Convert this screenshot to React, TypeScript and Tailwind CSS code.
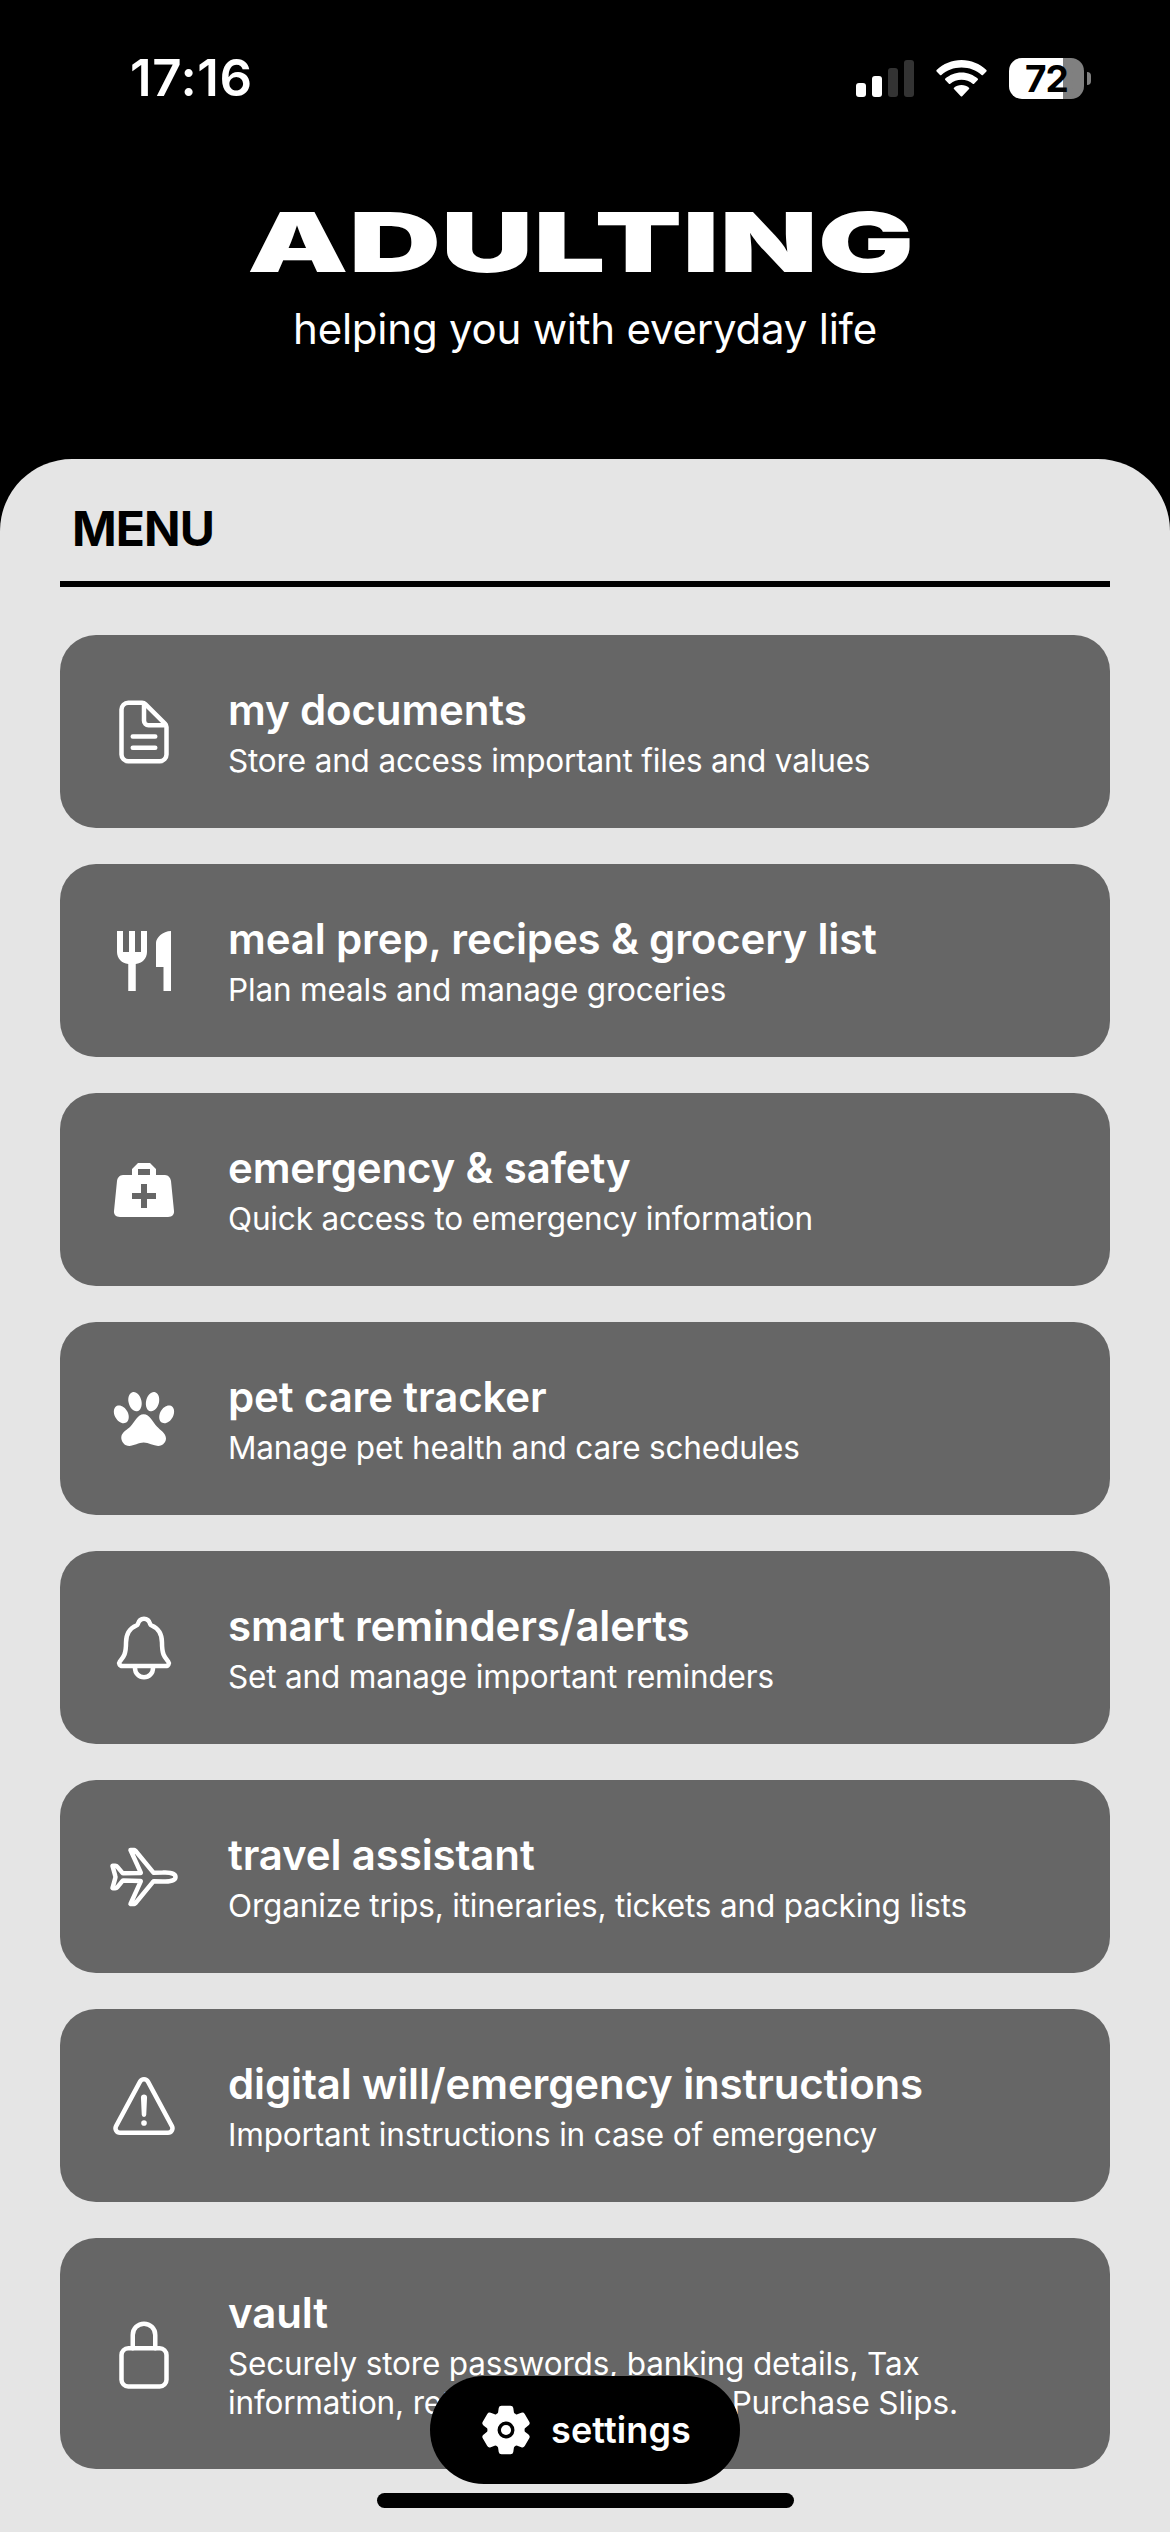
import React from "react";
import {
  IoDocumentTextOutline,
  IoNotificationsOutline,
  IoAirplaneOutline,
  IoWarningOutline,
  IoLockClosedOutline,
  IoSettings,
} from "react-icons/io5";
import { MdRestaurant } from "react-icons/md";

const glyph = "h-[72px] w-[72px] shrink-0";

function MedicalBag() {
  return (
    <svg viewBox="0 0 24 24" className={glyph} fill="currentColor">
      <path d="M10,3L8,5V7H5C3.85,7 3.12,8 3,9L2,19C1.88,20 2.54,21 4,21H20C21.46,21 22.12,20 22,19L21,9C20.88,8 20.06,7 19,7H16V5L14,3H10M10,5H14V7H10V5M11,10H13V13H16V15H13V18H11V15H8V13H11V10Z" />
    </svg>
  );
}

function Paw() {
  return (
    <svg viewBox="0 0 24 24" className={glyph} fill="currentColor">
      <path d="M8.35,3C9.53,2.83 10.78,4.12 11.14,5.9C11.5,7.67 10.85,9.25 9.67,9.43C8.5,9.61 7.24,8.32 6.87,6.54C6.5,4.77 7.17,3.19 8.35,3M15.5,3C16.69,3.19 17.35,4.77 17,6.54C16.62,8.32 15.37,9.61 14.19,9.43C13,9.25 12.35,7.67 12.72,5.9C13.08,4.12 14.33,2.83 15.5,3M3,7.6C4.14,7.11 5.69,8 6.5,9.55C7.26,11.13 7,12.79 5.87,13.28C4.74,13.77 3.2,12.89 2.41,11.32C1.62,9.75 1.9,8.08 3,7.6M21,7.6C22.1,8.08 22.38,9.75 21.59,11.32C20.8,12.89 19.26,13.77 18.13,13.28C17,12.79 16.74,11.13 17.5,9.55C18.31,8 19.86,7.11 21,7.6M19.33,18.38C19.37,19.32 18.65,20.36 17.79,20.75C16,21.57 13.88,19.87 11.89,19.87C9.9,19.87 7.76,21.64 6,20.75C5,20.26 4.31,18.96 4.44,17.88C4.62,16.39 6.41,15.59 7.47,14.5C8.88,13.09 9.88,10.44 11.89,10.44C13.89,10.44 14.95,13.05 16.3,14.5C17.41,15.72 19.26,16.75 19.33,18.38Z" />
    </svg>
  );
}

const items: { title: string; text: string; icon: React.ReactNode }[] = [
  { title: "my documents", text: "Store and access important files and values", icon: <IoDocumentTextOutline className={glyph} /> },
  { title: "meal prep, recipes & grocery list", text: "Plan meals and manage groceries", icon: <MdRestaurant className={glyph} /> },
  { title: "emergency & safety", text: "Quick access to emergency information", icon: <MedicalBag /> },
  { title: "pet care tracker", text: "Manage pet health and care schedules", icon: <Paw /> },
  { title: "smart reminders/alerts", text: "Set and manage important reminders", icon: <IoNotificationsOutline className={glyph} /> },
  { title: "travel assistant", text: "Organize trips, itineraries, tickets and packing lists", icon: <IoAirplaneOutline className={glyph} /> },
  { title: "digital will/emergency instructions", text: "Important instructions in case of emergency", icon: <IoWarningOutline className={glyph} /> },
  { title: "vault", text: "Securely store passwords, banking details, Tax information, returns, Warranties & Purchase Slips.", icon: <IoLockClosedOutline className={glyph} /> },
];

function StatusBar() {
  return (
    <div className="flex h-[156px] items-center justify-between pr-[79px] pl-[130px]">
      <span className="text-[51px] leading-[60px] font-semibold tracking-[0.6px]">17:16</span>
      <div className="flex items-center">
        <svg viewBox="0 0 58 37" className="mr-[22px] h-[37px] w-[58px]">
          <rect x="0" y="23" width="10" height="14" rx="3" fill="#fff" />
          <rect x="16" y="16" width="10" height="21" rx="3" fill="#fff" />
          <rect x="32" y="8" width="10" height="29" rx="3" fill="#333" />
          <rect x="48" y="0" width="10" height="37" rx="3" fill="#333" />
        </svg>
        <svg viewBox="0 0 51 37" className="mr-[22px] h-[37px] w-[51px]" fill="#fff">
          <path d="M25.500 0C16 0 7.200 3.700 0.600 10Q0 10.700 0.600 11.400L4 15Q4.700 15.600 5.400 15C10.800 10.100 17.800 7.400 25.500 7.400S40.200 10.100 45.600 15Q46.300 15.600 47 15L50.400 11.400Q51 10.700 50.400 10C43.800 3.700 35 0 25.500 0Z" />
          <path d="M25.500 12.400C19.200 12.400 13.500 14.800 9.300 18.600Q8.600 19.300 9.300 20L12.900 23.700Q13.600 24.300 14.300 23.700C17.300 21.200 21.200 19.700 25.500 19.700S33.700 21.200 36.700 23.700Q37.400 24.300 38.100 23.700L41.700 20Q42.400 19.300 41.700 18.600C37.500 14.800 31.800 12.400 25.500 12.400Z" />
          <path d="M25.500 25C22.600 25 20 26 18 27.700Q17.300 28.400 18 29.100L24.800 36.200Q25.500 36.900 26.200 36.200L33 29.100Q33.700 28.400 33 27.700C31 26 28.400 25 25.500 25Z" />
        </svg>
        <div className="flex h-[41px] w-[75px] items-center justify-center rounded-[13px] bg-gradient-to-r from-white from-[72%] to-[#808080] to-[72%]">
          <span className="text-[37px] leading-[41px] font-bold tracking-[-0.8px] text-black">72</span>
        </div>
        <div className="ml-[3px] h-[13px] w-[4px] rounded-r-full bg-[#808080]" />
      </div>
    </div>
  );
}

export default function App() {
  return (
    <div className="relative flex h-[2532px] w-[1170px] flex-col overflow-hidden bg-black font-['Inter',sans-serif] text-white">
      <header className="flex h-[459px] shrink-0 flex-col">
        <StatusBar />
        <div className="flex flex-col items-center pt-[36px]">
          <h1 className="mr-2 origin-center scale-x-[1.54] text-[83px] leading-[100px] font-black whitespace-nowrap">ADULTING</h1>
          <p className="mt-[11px] text-[42px] leading-[51px] tracking-[-0.23px]">helping you with everyday life</p>
        </div>
      </header>
      <main className="flex flex-1 flex-col rounded-t-[72px] bg-[#e5e5e5] px-[60px] pt-[41px]">
        <h2 className="border-b-[6px] border-black pb-[23px] pl-[12px] text-[48px] leading-[58px] font-bold tracking-[-0.9px] text-black">MENU</h2>
        <div className="mt-12 flex flex-col gap-9">
          {items.map((item) => (
            <button key={item.title} className="flex items-center gap-12 rounded-[36px] bg-[#666666] px-12 pt-[49px] pb-12 text-left last:pb-[47px]">
              {item.icon}
              <span className="flex flex-1 flex-col gap-[6px]">
                <span className="text-[42px] leading-[51px] font-semibold tracking-[-0.14px]">{item.title}</span>
                <span className="text-[31.5px] leading-[39px] tracking-[-0.17px]">{item.text}</span>
              </span>
            </button>
          ))}
        </div>
      </main>
      <button className="absolute top-[2376px] left-[430px] flex h-[108px] w-[310px] items-center justify-center gap-[18px] rounded-full bg-black">
        <IoSettings className="h-[54px] w-[54px]" />
        <span className="text-[36px] leading-[44px] font-semibold tracking-[0.1px]">settings</span>
      </button>
      <div className="absolute top-[2493px] left-[377px] h-[15px] w-[417px] rounded-full bg-black" />
    </div>
  );
}
